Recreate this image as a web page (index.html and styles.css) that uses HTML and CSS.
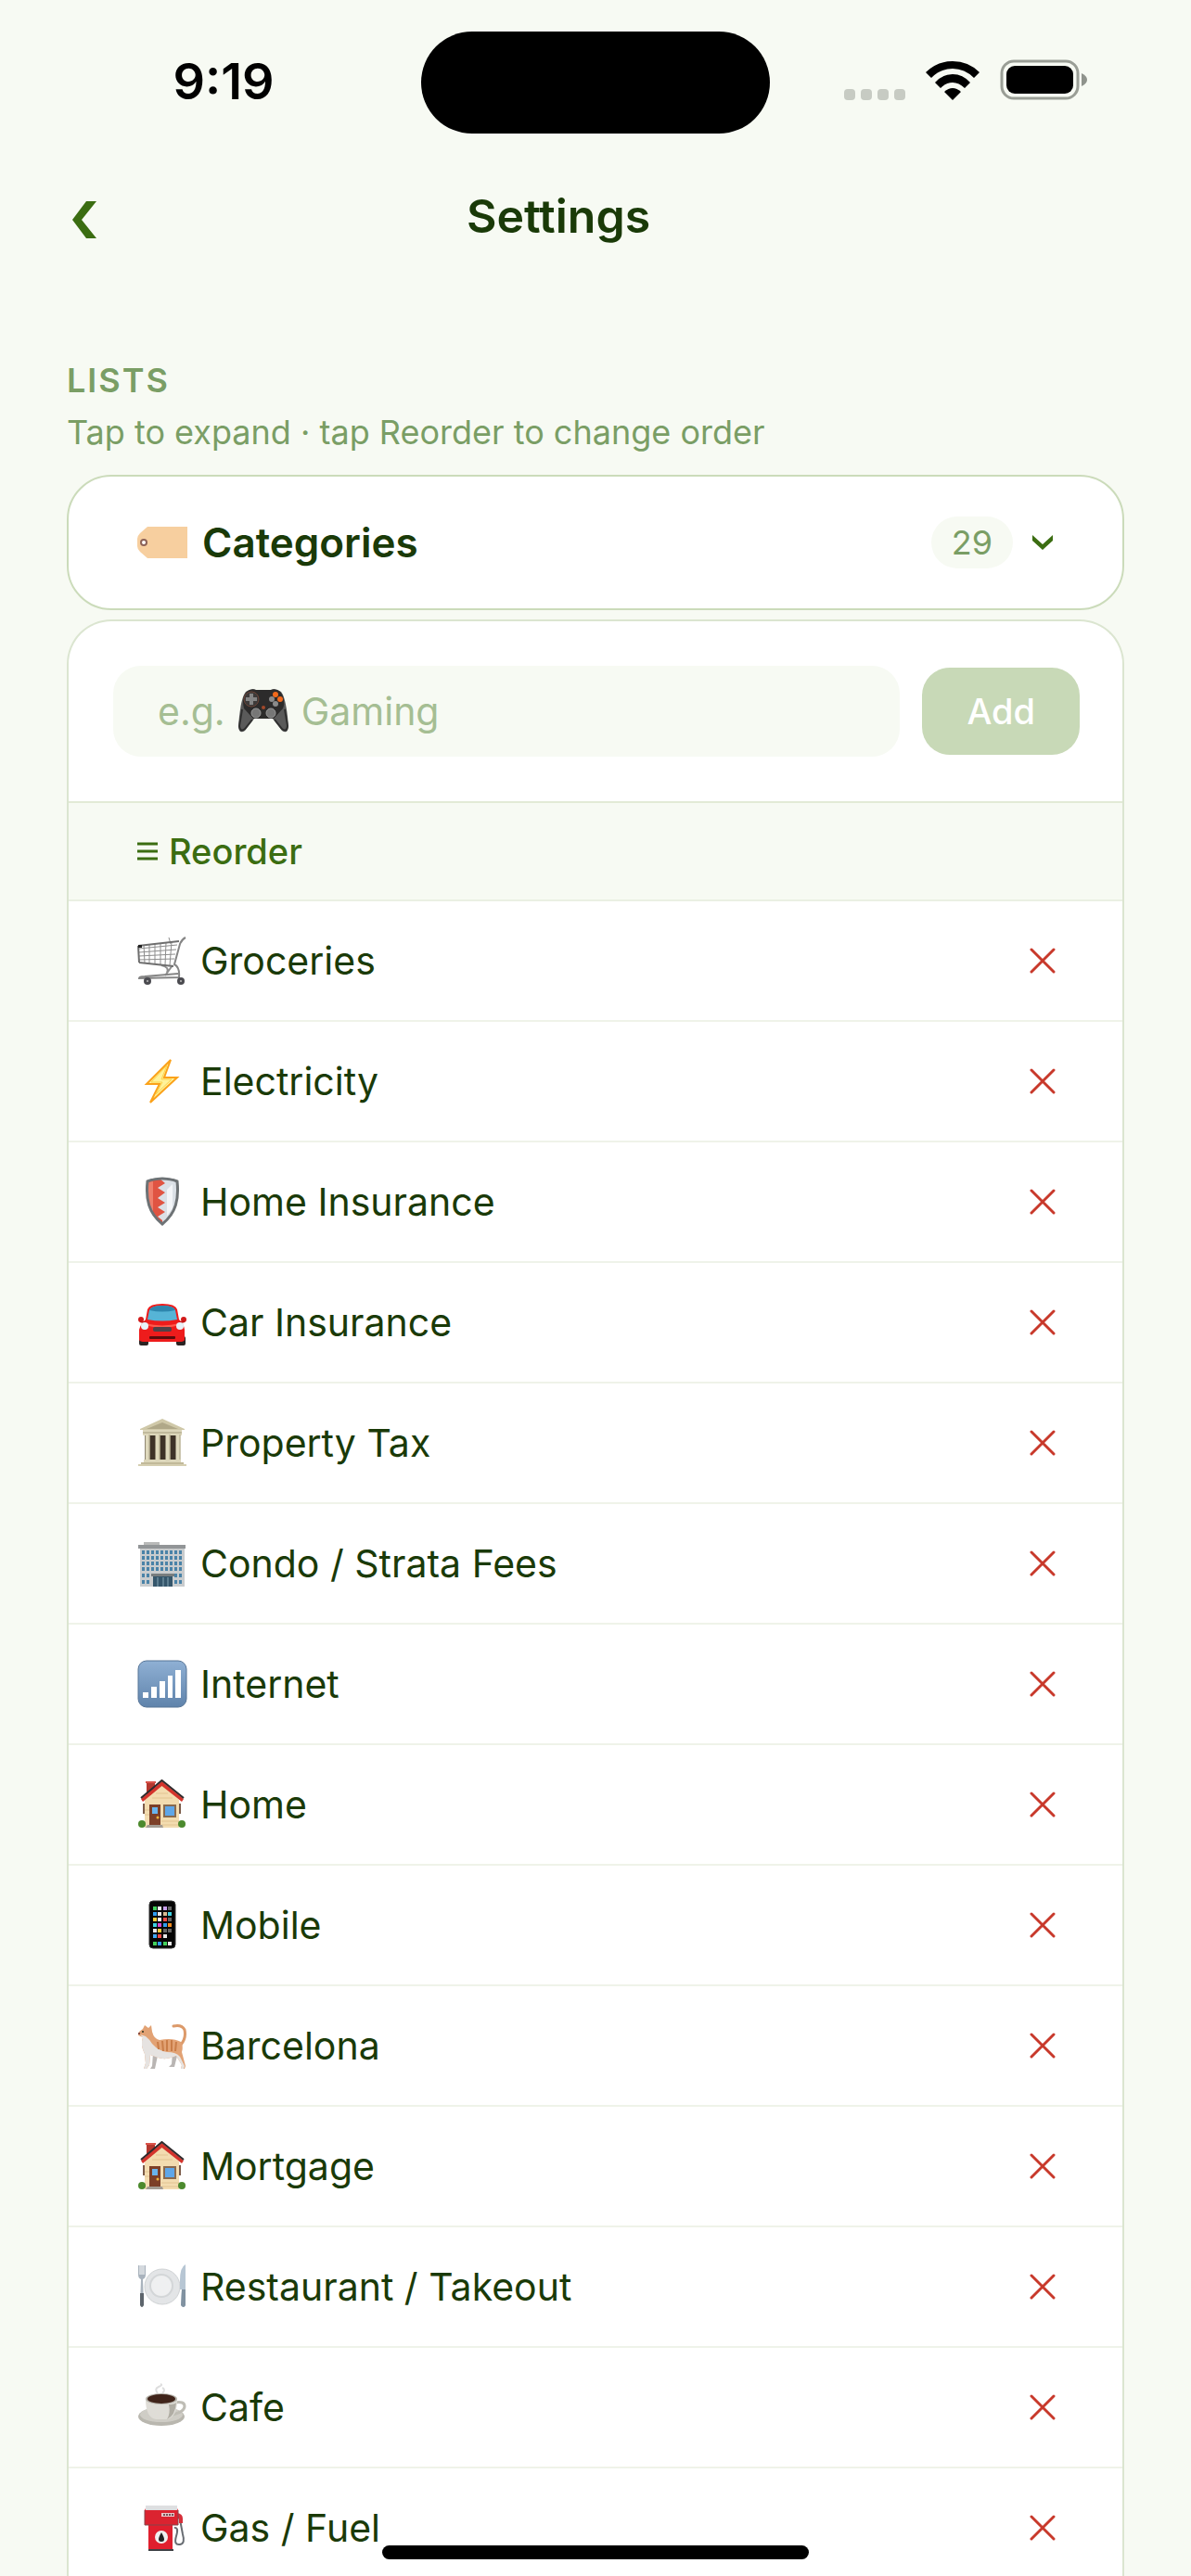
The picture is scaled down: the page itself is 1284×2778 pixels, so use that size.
FILE: index.html
```html
<!DOCTYPE html>
<html lang="en">
<head>
    <meta charset="UTF-8">
    <meta name="viewport" content="width=device-width, initial-scale=1.0">
    <title>Settings</title>
    <link rel="stylesheet" href="styles.css">
</head>
<body>
    <!-- Icons used more than once -->
    <svg class="sprite" aria-hidden="true">
        <symbol id="icon-house" viewBox="0 0 54 54">
            <rect x="10" y="2" width="9" height="15" fill="#b5382f"/>
            <rect x="9" y="2" width="11" height="2" fill="#d9534a"/>
            <path d="M8 22 26.500 6 45 22V52H8z" fill="#f3dcb0"/>
            <path d="M8 33H13M8 38H13M26 45H45M26 49H45M20 15H33M16 20H38" stroke="#e2c492" stroke-width="1"/>
            <path d="M4 21 26.500 2 50 21 48 24 26.500 7 6 24z" fill="#d4342c"/>
            <path d="M4 20 26.500 1 50 20" fill="none" stroke="#2f2a2c" stroke-width="2"/>
            <path d="M7 26V37M46 26V37" stroke="#7b5b49" stroke-width="2"/>
            <rect x="13" y="27" width="12" height="22" fill="#7c3f28"/>
            <rect x="16" y="30" width="6" height="7" fill="#69b4ee"/>
            <circle cx="22" cy="41" r="1.500" fill="#f0b43c"/>
            <path d="M11 49H27L28 52H9z" fill="#a39c93"/>
            <rect x="28" y="27" width="14" height="14" fill="#8a6a4e"/>
            <rect x="30" y="29" width="10" height="10" fill="#5fa6e8"/>
            <circle cx="5" cy="48" r="4" fill="#4c8a2e"/>
            <circle cx="48" cy="48" r="4" fill="#4c8a2e"/>
        </symbol>
        <symbol id="icon-remove" viewBox="0 0 28 28">
            <path d="M2 2 26 26M26 2 2 26" fill="none" stroke="#c8392b" stroke-width="3" stroke-linecap="round"/>
        </symbol>
    </svg>

    <div class="status-bar">
        <span class="status-time">9:19</span>
        <span class="island"></span>
        <div class="status-icons">
            <svg width="66" height="12" viewBox="0 0 66 12" fill="#c7cbc3" class="signal-dots">
                <rect width="12" height="12" rx="4"/>
                <rect x="18" width="12" height="12" rx="4"/>
                <rect x="36" width="12" height="12" rx="4"/>
                <rect x="54" width="12" height="12" rx="4"/>
            </svg>
            <svg width="58" height="43" viewBox="0 0 58 43">
                <path d="M0 13Q12 1 29 1T58 13L52 19Q42 9 29 9T6 19z"/>
                <path d="M10 24Q18 15 29 15T48 24L42 30Q36 24 29 24T16 30z"/>
                <path d="M20 34Q29 26 38 34L29 43z"/>
            </svg>
            <svg width="94" height="44" viewBox="0 0 94 44">
                <rect x="2" y="2" width="82" height="40" rx="13" fill="none" stroke="#9a9e96" stroke-width="3"/>
                <rect x="7" y="7" width="72" height="30" rx="9"/>
                <path d="M88 15Q94 18 94 22T88 29z" fill="#8f938c"/>
            </svg>
        </div>
    </div>

    <header class="header">
        <button class="back" type="button" aria-label="Back">
            <svg width="28" height="40" viewBox="0 0 28 40">
                <path d="M15 0H26L10 20 26 40H15L0 20z" fill="#3b6d11"/>
            </svg>
        </button>
        <h1>Settings</h1>
        <span class="header-spacer"></span>
    </header>

    <main class="content">
        <h2 class="section-title">LISTS</h2>
        <p class="section-hint">Tap to expand · tap Reorder to change order</p>

        <button class="list-toggle" type="button" aria-expanded="true">
            <svg class="icon" viewBox="0 0 54 54">
                <path d="M11 10H54V44H11L3 37Q0 34 0 31V23Q0 20 3 17z" fill="#f7cf9f"/>
                <circle cx="7" cy="27" r="4" fill="#8d6358"/>
                <circle cx="7" cy="27" r="2" fill="#fff"/>
            </svg>
            <span class="list-name">Categories</span>
            <span class="count">29</span>
            <svg width="24" height="18" viewBox="0 0 24 18">
                <path d="M1 1 12 11 23 1V7L12 17 1 7z" fill="#3b6d11"/>
            </svg>
        </button>

        <section class="panel">
            <form class="add-form">
                <div class="field">
                    <input id="new-category" class="field-input" type="text" placeholder=" " aria-label="New category">
                    <label class="field-hint" for="new-category">
                        <span>e.g.</span>
                        <svg class="icon" viewBox="0 0 54 54">
                            <path d="M8 6Q13 2 19 4H35Q41 2 46 6C51 12 53 30 54 44Q53 52 47 48L37 35H17L7 48Q1 52 0 44C1 30 3 12 8 6z" fill="#5a5a5a"/>
                            <path d="M9 6Q14 2 19 4H35Q40 2 45 6C50 12 50 20 48 24L38 35H16L6 24Q3 12 9 6z" fill="#2c2b2b"/>
                            <path d="M4 25 1 43Q2 50 7 46L15 36M50 25 53 43Q52 50 47 46L39 36" fill="none" stroke="#303030" stroke-width="2"/>
                            <circle cx="14" cy="14" r="8" fill="#3d3a39" stroke="#6b4437"/>
                            <path d="M14 8V20M8 14H20" stroke="#858585" stroke-width="4"/>
                            <circle cx="40" cy="9" r="3" fill="#f26a1c"/>
                            <circle cx="45" cy="14" r="3" fill="#f26a1c"/>
                            <circle cx="36" cy="14" r="3" fill="#8b8b8b"/>
                            <circle cx="40" cy="19" r="3" fill="#8b8b8b"/>
                            <circle cx="27" cy="23" r="2" fill="#a2482b"/>
                            <circle cx="19" cy="29" r="5" fill="#777" stroke="#999"/>
                            <circle cx="35" cy="29" r="5" fill="#777" stroke="#999"/>
                        </svg>
                        <span>Gaming</span>
                    </label>
                </div>
                <button class="add-button" type="button">Add</button>
            </form>

            <button class="reorder" type="button">
                <svg width="22" height="20" viewBox="0 0 22 20">
                    <path d="M0 2H22M0 10H22M0 18H22" stroke="#3b6d11" stroke-width="3"/>
                </svg>
                Reorder
            </button>

            <ul class="rows">
                <li class="row">
                    <svg class="icon" viewBox="0 0 54 54">
                        <g fill="none" stroke="#8d8d8d" stroke-width="1">
                            <path d="M2 14 43 10M2 18 42 15M2 22 41 20M2 26 40 25M7 10 8 30M13 10V30M19 9V31M25 8V31M31 7 30 32M37 7 35 32"/>
                            <path d="M34 2 36 9"/>
                            <path d="M38 32Q33 39 30 43M26 32Q35 34 32 40" stroke-width="2"/>
                        </g>
                        <path d="M1 11 45 6M2 29 39 33M1 11 2 29" fill="none" stroke="#6f6f6f" stroke-width="2"/>
                        <path d="M52 2Q48 4 46 9L40 31Q46 34 45 45L2 46Q2 44 8 44L44 41" fill="none" stroke="#858585" stroke-width="2"/>
                        <rect x="1" y="10" width="4" height="3" fill="#222"/>
                        <circle cx="11" cy="49" r="4" fill="#4b4b50"/>
                        <circle cx="47" cy="49" r="4" fill="#4b4b50"/>
                        <circle cx="11" cy="49" r="1" fill="#bbb"/>
                        <circle cx="47" cy="49" r="1" fill="#bbb"/>
                    </svg>
                    <span class="row-name">Groceries</span>
                    <button class="remove" type="button" aria-label="Remove Groceries"><svg><use href="#icon-remove"/></svg></button>
                </li>
                <li class="row">
                    <svg class="icon" viewBox="0 0 54 54">
                        <path d="M36 4 10 30H24L14 50 43 23H29z" fill="#fff29a" stroke="#fba21a" stroke-width="2"/>
                        <path d="M32 10 15 28H27L20 41 37 25H26z" fill="none" stroke="#fdd24a" stroke-width="1"/>
                    </svg>
                    <span class="row-name">Electricity</span>
                    <button class="remove" type="button" aria-label="Remove Electricity"><svg><use href="#icon-remove"/></svg></button>
                </li>
                <li class="row">
                    <svg class="icon" viewBox="0 0 54 54">
                        <path d="M27 2Q36 2 43 5C45 24 42 39 27 51 12 39 9 24 11 5Q18 2 27 2z" fill="#dbe0e6"/>
                        <path d="M24 2Q17 2 11 5C9 24 12 39 27 51V47L22 43 30 38 22 33 30 28 22 23 30 17 22 12 30 7z" fill="#e05442"/>
                        <path d="M17 5V38L12 30V6z" fill="#ee7f6c"/>
                        <path d="M32 14V42L38 34V8z" fill="#f3f5f8"/>
                        <path d="M27 2Q36 2 43 5C45 24 42 39 27 51 12 39 9 24 11 5Q18 2 27 2z" fill="none" stroke="#6d7275" stroke-width="3"/>
                    </svg>
                    <span class="row-name">Home Insurance</span>
                    <button class="remove" type="button" aria-label="Remove Home Insurance"><svg><use href="#icon-remove"/></svg></button>
                </li>
                <li class="row">
                    <svg class="icon" viewBox="0 0 54 54">
                        <rect x="2" y="42" width="10" height="10" rx="2" fill="#2b2423"/>
                        <rect x="42" y="42" width="10" height="10" rx="2" fill="#2b2423"/>
                        <path d="M9 24 11 13Q13 7 27 7T43 13L45 24Q50 28 51 35V46Q50 48 46 48H8Q3 48 2 46V35Q4 28 9 24z" fill="#ee1c1c"/>
                        <ellipse cx="4" cy="24" rx="3" ry="3" fill="#d21a1a"/>
                        <ellipse cx="50" cy="24" rx="3" ry="3" fill="#d21a1a"/>
                        <path d="M3 26 10 28M51 26 44 28" stroke="#c41515" stroke-width="2"/>
                        <path d="M11 24 13 14Q15 9 27 9T41 14L43 24Q27 27 11 24z" fill="#56b4d6"/>
                        <path d="M13 14Q15 9 27 9T41 14Q27 17 13 14z" fill="#2d86ad"/>
                        <path d="M8 29Q27 34 46 29" fill="none" stroke="#ff5a4c" stroke-width="2"/>
                        <circle cx="8" cy="31" r="4" fill="#e7f2f8"/>
                        <circle cx="46" cy="31" r="4" fill="#e7f2f8"/>
                        <rect x="17" y="32" width="20" height="5" rx="2" fill="#514248"/>
                        <rect x="13" y="42" width="28" height="3" rx="1" fill="#5b0c0c"/>
                    </svg>
                    <span class="row-name">Car Insurance</span>
                    <button class="remove" type="button" aria-label="Remove Car Insurance"><svg><use href="#icon-remove"/></svg></button>
                </li>
                <li class="row">
                    <svg class="icon" viewBox="0 0 54 54">
                        <rect x="8" y="18" width="38" height="28" fill="#3e3228"/>
                        <path d="M27 1 51 12V13H3V12z" fill="#cfc8a8"/>
                        <path d="M27 5 44 12H10z" fill="#b0a888"/>
                        <rect x="6" y="13" width="42" height="6" fill="#dcd6ba"/>
                        <path d="M6 16H48" stroke="#a59d7e"/>
                        <path d="M11 18V45M22 18V45M33 18V45M44 18V45" stroke="#dfd9bd" stroke-width="5"/>
                        <path d="M13 18V45M24 18V45M35 18V45M46 18V45" stroke="#aaa284" stroke-width="1"/>
                        <path d="M7 45H47V48H7z" fill="#dcd6ba"/>
                        <path d="M4 48H50V50H4z" fill="#c1b999"/>
                        <path d="M1 50H53V52H1z" fill="#d5ceb0"/>
                    </svg>
                    <span class="row-name">Property Tax</span>
                    <button class="remove" type="button" aria-label="Remove Property Tax"><svg><use href="#icon-remove"/></svg></button>
                </li>
                <li class="row">
                    <svg class="icon" viewBox="0 0 54 54">
                        <rect x="7" y="4" width="17" height="4" fill="#b9bab9"/>
                        <rect x="3" y="9" width="48" height="43" fill="#c9ccce"/>
                        <rect x="1" y="7" width="51" height="4" fill="#929597"/>
                        <g stroke="#4a83a8" stroke-width="4" stroke-dasharray="3 2">
                            <path d="M5 15H50M5 21H50M5 27H50M5 33H50"/>
                            <path d="M5 40H15M40 40H50M5 47H15M40 47H50"/>
                        </g>
                        <rect x="17" y="38" width="21" height="14" fill="#35566b"/>
                        <path d="M22 42V52M28 42V52M33 42V52" stroke="#86a6b6"/>
                        <rect x="15" y="38" width="25" height="3" fill="#777c7e"/>
                    </svg>
                    <span class="row-name">Condo / Strata Fees</span>
                    <button class="remove" type="button" aria-label="Remove Condo / Strata Fees"><svg><use href="#icon-remove"/></svg></button>
                </li>
                <li class="row">
                    <svg class="icon" viewBox="0 0 54 54">
                        <defs>
                            <linearGradient id="tile-blue" x1="0" y1="0" x2="0" y2="1">
                                <stop offset="0" stop-color="#8fb0d4"/>
                                <stop offset="1" stop-color="#5f83ab"/>
                            </linearGradient>
                        </defs>
                        <rect x="1" y="2" width="52" height="50" rx="9" fill="url(#tile-blue)" stroke="#567496" stroke-width="1"/>
                        <path d="M6 36H12V42H6zM15 30H21V42H15zM24 24H30V42H24zM33 18H38V42H33zM41 12H47V42H41z" fill="#fff"/>
                    </svg>
                    <span class="row-name">Internet</span>
                    <button class="remove" type="button" aria-label="Remove Internet"><svg><use href="#icon-remove"/></svg></button>
                </li>
                <li class="row">
                    <svg class="icon"><use href="#icon-house"/></svg>
                    <span class="row-name">Home</span>
                    <button class="remove" type="button" aria-label="Remove Home"><svg><use href="#icon-remove"/></svg></button>
                </li>
                <li class="row">
                    <svg class="icon" viewBox="0 0 54 54">
                        <rect x="13" y="1" width="28" height="51" rx="4" fill="#060606" stroke="#333"/>
                        <g stroke-width="4" stroke-dasharray="4 50">
                            <path d="M17 39H21" stroke="#3fa9f5"/>
                            <path d="M17 9H21M17 47H21M28 47H32" stroke="#43d15c"/>
                            <path d="M22 9H26" stroke="#f4f4f4"/>
                            <path d="M28 9H32" stroke="#c9a0ee"/>
                            <path d="M33 9H37M33 21H37M33 33H37M28 33H32" stroke="#666"/>
                            <path d="M17 15H21M22 47H26M28 27H32" stroke="#2f9df0"/>
                            <path d="M22 15H26M33 47H37M28 39H32M17 33H21" stroke="#e9e9e9"/>
                            <path d="M28 15H32" stroke="#d8bb92"/>
                            <path d="M33 15H37M17 27H21" stroke="#3ed3e4"/>
                            <path d="M17 21H21M22 33H26" stroke="#f9cf3b"/>
                            <path d="M22 21H26" stroke="#fff"/>
                            <path d="M28 21H32M22 39H26" stroke="#ee4a45"/>
                            <path d="M22 27H26" stroke="#d94bd0"/>
                            <path d="M33 27H37" stroke="#f28b1d"/>
                        </g>
                    </svg>
                    <span class="row-name">Mobile</span>
                    <button class="remove" type="button" aria-label="Remove Mobile"><svg><use href="#icon-remove"/></svg></button>
                </li>
                <li class="row">
                    <svg class="icon" viewBox="0 0 54 54">
                        <path d="M47 26Q53 19 51 10 48 4 39 6" fill="none" stroke="#dc9a6a" stroke-width="3" stroke-linecap="round"/>
                        <path d="M17 35 16 49 14 52H19L22 38zM38 34 37 47 34 50H40L43 38z" fill="#b9b5b3"/>
                        <path d="M8 5 12 8 15 5 16 12Q18 20 24 21 38 18 47 23 50 28 48 34L52 49 51 52H47L48 48 42 38Q32 43 22 40L14 37 13 48 10 52H7L9 46 8 36Q3 26 6 18L1 16 2 12 6 9z" fill="#e2a274"/>
                        <path d="M3 15 9 17Q13 20 16 25 23 33 32 34 42 34 46 39L51 49 50 52H47L48 48 42 38Q32 43 22 40L14 37 13 48 10 52H7L9 46 8 36Q3 26 6 18z" fill="#e6e3e1"/>
                        <path d="M22 23 23 31M27 22 28 33M32 21V33M37 21V33M42 23 41 33" stroke="#c97d48" stroke-width="2"/>
                        <circle cx="6" cy="12" r="1" fill="#29301d"/>
                        <path d="M1 14H3" stroke="#8b4e46" stroke-width="2"/>
                    </svg>
                    <span class="row-name">Barcelona</span>
                    <button class="remove" type="button" aria-label="Remove Barcelona"><svg><use href="#icon-remove"/></svg></button>
                </li>
                <li class="row">
                    <svg class="icon"><use href="#icon-house"/></svg>
                    <span class="row-name">Mortgage</span>
                    <button class="remove" type="button" aria-label="Remove Mortgage"><svg><use href="#icon-remove"/></svg></button>
                </li>
                <li class="row">
                    <svg class="icon" viewBox="0 0 54 54">
                        <circle cx="27" cy="27" r="19" fill="#e3e5e7" stroke="#cfd2d4"/>
                        <circle cx="26" cy="26" r="13" fill="#d3d6d8"/>
                        <circle cx="26" cy="26" r="11" fill="#eff0f1"/>
                        <path d="M1 4V14Q1 18 4 19L3 46Q5 51 7 46L6 19Q9 18 9 14V4" fill="#a9b3bd"/>
                        <path d="M3 4V14M5 4V14M7 4V14" stroke="#fff" stroke-width="1"/>
                        <path d="M3 34H7V47Q5 51 3 47z" fill="#5d656c"/>
                        <path d="M52 3Q46 6 46 20V30H48L47 47Q50 51 52 47z" fill="#b7c6d4"/>
                        <path d="M48 30H52V47Q50 51 47 47z" fill="#8192a1"/>
                    </svg>
                    <span class="row-name">Restaurant / Takeout</span>
                    <button class="remove" type="button" aria-label="Remove Restaurant / Takeout"><svg><use href="#icon-remove"/></svg></button>
                </li>
                <li class="row">
                    <svg class="icon" viewBox="0 0 54 54">
                        <path d="M22 12Q18 7 23 5T25 2M27 12Q31 8 27 6" fill="none" stroke="#dedede" stroke-width="2"/>
                        <ellipse cx="26" cy="37" rx="25" ry="10" fill="#b9b7af"/>
                        <ellipse cx="26" cy="35" rx="23" ry="8" fill="#cfcdc6"/>
                        <path d="M40 22Q51 20 51 26T38 35" fill="none" stroke="#bfbdb5" stroke-width="3"/>
                        <path d="M9 18H43Q43 38 32 40H20Q9 38 9 18z" fill="#dfddd7"/>
                        <path d="M34 24Q40 24 42 22 41 36 32 40 36 34 34 24z" fill="#b0ada4"/>
                        <ellipse cx="26" cy="18" rx="17" ry="6" fill="#b5b2aa"/>
                        <ellipse cx="26" cy="18" rx="15" ry="5" fill="#40241a"/>
                    </svg>
                    <span class="row-name">Cafe</span>
                    <button class="remove" type="button" aria-label="Remove Cafe"><svg><use href="#icon-remove"/></svg></button>
                </li>
                <li class="row">
                    <svg class="icon" viewBox="0 0 54 54">
                        <path d="M40 27Q45 26 42 36T46 45Q52 44 49 34L46 18 43 12" fill="none" stroke="#686c72" stroke-width="2"/>
                        <path d="M43 11Q49 12 49 17V22H45V17H43z" fill="#d6303b"/>
                        <rect x="12" y="24" width="26" height="27" fill="#e01f2e"/>
                        <path d="M10 4H42L44 8V24H8V8z" fill="#db2330"/>
                        <path d="M9 3H43V8H9z" fill="#dedfe1"/>
                        <path d="M8 8V24H44V8" fill="none" stroke="#85444a"/>
                        <rect x="26" y="11" width="14" height="4" fill="#e6c7c9"/>
                        <path d="M28 13H39" stroke="#775257" stroke-width="2" stroke-dasharray="2 1"/>
                        <circle cx="26" cy="37" r="7" fill="#f0f0f0"/>
                        <path d="M26 32Q32 42 26 42T26 32z" fill="#222"/>
                        <path d="M12 50H39V52H12z" fill="#3f4145"/>
                    </svg>
                    <span class="row-name">Gas / Fuel</span>
                    <button class="remove" type="button" aria-label="Remove Gas / Fuel"><svg><use href="#icon-remove"/></svg></button>
                </li>
            </ul>
        </section>
    </main>

    <div class="home-indicator"></div>
</body>
</html>
```
FILE: styles.css
```css
* {
    margin: 0;
    padding: 0;
    box-sizing: border-box;
}

body {
    height: 100vh;
    overflow: hidden;
    background: #f7faf3;
    color: #1a3a08;
    font-family: Inter, "Liberation Sans", sans-serif;
    font-size: 41px;
    line-height: 48px;
}

button,
input {
    font: inherit;
    color: inherit;
    border: none;
    background: none;
}

svg {
    display: block;
    flex-shrink: 0;
}

.sprite {
    width: 0;
    height: 0;
    position: absolute;
}

.icon {
    width: 54px;
    height: 54px;
}

/* Status bar */
.status-bar {
    display: grid;
    grid-template-columns: 1fr 376px 1fr;
    align-items: center;
    height: 160px;
    padding-bottom: 14px;
    color: #000;
}

.status-time {
    padding: 30px 0 0 28px;
    text-align: center;
    font-size: 54px;
    font-weight: 600;
}

.island {
    height: 110px;
    margin-top: 34px;
    border-radius: 55px;
    background: #000;
    align-self: start;
}

.status-icons {
    display: flex;
    justify-content: flex-end;
    align-items: center;
    gap: 22px;
    padding: 26px 112px 0 0;
}

.signal-dots {
    align-self: flex-end;
}

/* Header */
.header {
    display: flex;
    align-items: center;
    height: 146px;
    padding: 0 72px;
}

.back {
    width: 40px;
    padding: 8px 6px 0;
}

.header h1 {
    flex: 1;
    text-align: center;
    font-size: 50px;
    font-weight: 600;
}

.header-spacer {
    width: 120px;
}

/* Lists */
.content {
    padding: 80px 72px 0;
}

.section-title {
    margin-bottom: 8px;
    color: #7a9e65;
    font-size: 36px;
    font-weight: 600;
    letter-spacing: 2px;
}

.section-hint {
    margin-bottom: 22px;
    color: #7a9e65;
    font-size: 36px;
}

.list-toggle {
    display: flex;
    align-items: center;
    width: 100%;
    height: 146px;
    margin-bottom: 10px;
    padding: 0 74px;
    background: #fff;
    border: 2px solid #cbdbba;
    border-radius: 48px;
    text-align: left;
}

.list-name {
    flex: 1;
    margin-left: 16px;
    font-size: 44px;
    font-weight: 600;
}

.count {
    margin-right: 20px;
    padding: 4px 22px;
    border-radius: 28px;
    background: #f7faf3;
    color: #7a9e65;
    font-size: 36px;
}

.panel {
    background: #fff;
    border: 2px solid #dbe5d0;
    border-bottom: none;
    border-radius: 48px 48px 0 0;
    overflow: hidden;
}

.add-form {
    display: flex;
    align-items: center;
    gap: 24px;
    padding: 48px 46px 48px 48px;
    border-bottom: 2px solid #e2ead6;
}

.field {
    display: grid;
    flex: 1;
    height: 98px;
    border-radius: 30px;
    background: #f7faf3;
}

.field-input,
.field-hint {
    grid-area: 1 / 1;
    padding: 0 48px;
}

.field-input {
    width: 100%;
    border-radius: 30px;
}

.field-hint {
    display: flex;
    align-items: center;
    gap: 14px;
    color: #a5be93;
    pointer-events: none;
}

.field-input:not(:placeholder-shown) + .field-hint {
    visibility: hidden;
}

.add-button {
    height: 94px;
    padding: 0 48px;
    border-radius: 30px;
    background: #c8d9b7;
    color: #fff;
    font-size: 38px;
    font-weight: 500;
}

.reorder {
    display: flex;
    align-items: center;
    gap: 12px;
    width: 100%;
    height: 106px;
    padding: 0 74px;
    border-bottom: 2px solid #eaf0e3;
    background: #f7faf3;
    color: #3b6d11;
    font-size: 38px;
    font-weight: 500;
}

.rows {
    list-style: none;
}

.row {
    display: flex;
    align-items: center;
    height: 130px;
    padding: 0 72px 0 74px;
    border-bottom: 2px solid #eff3e9;
}

.row-name {
    flex: 1;
    margin-left: 14px;
}

.remove svg {
    width: 28px;
    height: 28px;
}

.home-indicator {
    position: fixed;
    bottom: 18px;
    left: 50%;
    width: 460px;
    height: 15px;
    margin-left: -230px;
    border-radius: 8px;
    background: #000;
}
```
